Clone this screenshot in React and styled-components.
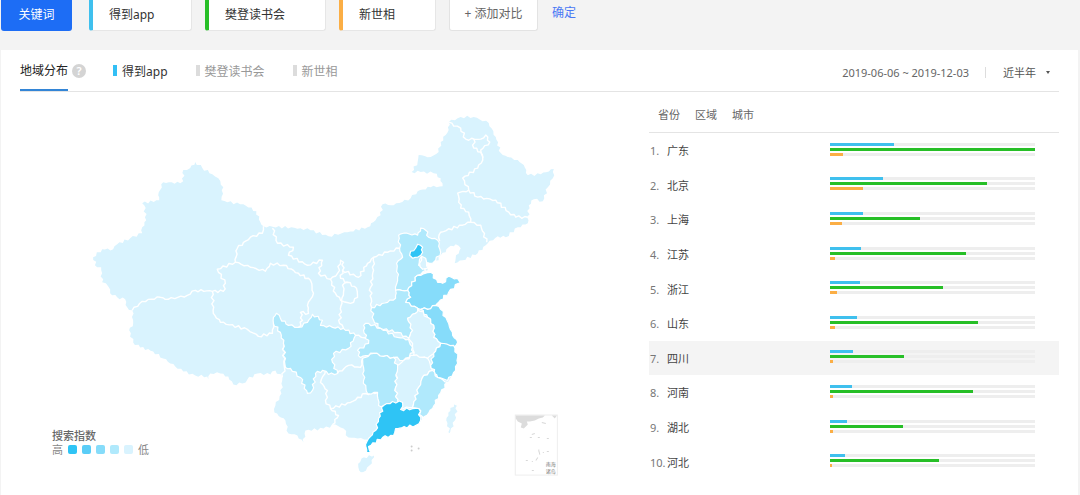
import React from 'react';
import styled, { createGlobalStyle } from 'styled-components';

const GlobalStyle = createGlobalStyle`
  * { box-sizing: border-box; }
  body {
    margin: 0;
    background: #f3f3f3;
    color: #333;
    font-family: "Noto Sans", "Noto Sans CJK SC", sans-serif;
    font-size: 12px;
    line-height: 18px;
  }
  button, input, select { font: inherit; }
`;

const Page = styled.div`
  display: flex;
  flex-direction: column;
  min-height: 100vh;
`;

const CompareBar = styled.form`
  display: flex;
  align-items: flex-start;
  height: 50px;
  padding-left: 1px;
`;

const KeywordButton = styled.button`
  width: 71px;
  height: 31px;
  margin-right: 17px;
  padding: 0 0 2px;
  border: 0;
  border-radius: 0 0 3px 3px;
  background: #1d6df5;
  color: #fff;
`;

const TermInput = styled.input`
  width: ${(p) => p.$width}px;
  height: 31px;
  margin-right: 13px;
  padding: 0 8px 2px 16px;
  border: 1px solid #e6e6e6;
  border-top: 0;
  border-left: 4px solid ${(p) => p.$color};
  border-radius: 0 0 3px 3px;
  background: #fff;
  color: #333;
  outline: 0;
`;

const AddButton = styled.button`
  width: 89px;
  height: 31px;
  padding: 0 0 2px;
  border: 1px solid #e3e3e3;
  border-top: 0;
  border-radius: 0 0 3px 3px;
  background: #fff;
  color: #666;
`;

const ConfirmButton = styled.button`
  margin: 4px 0 0 14px;
  padding: 0;
  border: 0;
  background: none;
  color: #4a78f5;
`;

const Panel = styled.main`
  flex: 1;
  margin: 0 2px 0 1px;
  padding: 0 19px;
  background: #fff;
`;

const PanelHeader = styled.header`
  display: flex;
  align-items: stretch;
  height: 42px;
  border-bottom: 1px solid #e4e4e4;
`;

const PanelTitle = styled.h2`
  height: 41px;
  margin: 0;
  padding-top: 12px;
  border-bottom: 2px solid #3385d6;
  color: #222;
  font-size: 12px;
  font-weight: 400;
`;

const HelpButton = styled.button`
  align-self: center;
  width: 14px;
  height: 14px;
  margin: 0 27px 0 4px;
  padding: 0;
  border: 0;
  border-radius: 50%;
  background: #d4d4d4;
  color: #fff;
  font-size: 11px;
  font-weight: 600;
  line-height: 14px;
`;

const SeriesList = styled.div`
  display: flex;
  gap: 28px;
`;

const SeriesButton = styled.button`
  display: flex;
  align-items: center;
  gap: 5px;
  padding: 2px 0 0;
  border: 0;
  background: none;
  color: ${(p) => (p.$active ? '#333' : '#999')};

  &::before {
    content: "";
    width: 4px;
    height: 11px;
    margin-bottom: 3px;
    background: ${(p) => (p.$active ? '#33bff5' : '#dcdcdc')};
  }
`;

const RangeGroup = styled.div`
  display: flex;
  align-items: center;
  margin-left: auto;
  padding: 4px 9px 0 0;
  color: #666;
  font-size: 11px;
`;

const RangeDivider = styled.span`
  width: 1px;
  height: 11px;
  margin: 0 17px 0 16px;
  background: #ddd;
`;

const PeriodField = styled.div`
  display: grid;
  align-items: center;
  width: 47px;

  & > * { grid-area: 1 / 1; }
  svg { justify-self: end; pointer-events: none; }
`;

const PeriodSelect = styled.select`
  appearance: none;
  width: 100%;
  height: 18px;
  padding: 0;
  border: 0;
  background: none;
  color: #555;
  outline: 0;
`;

const Content = styled.div`
  display: grid;
  grid-template-columns: minmax(0, 1fr) 410px;
  align-items: start;
`;

const MapFigure = styled.figure`
  display: grid;
  margin: 0;

  & > * { grid-area: 1 / 1; }
`;

const MapSvg = styled.svg`
  display: block;
  width: 100%;
  height: auto;
`;

const Legend = styled.figcaption`
  align-self: end;
  justify-self: start;
  padding: 0 0 38px 32px;
  color: #888;
  font-size: 11px;
  line-height: 14px;
`;

const LegendTitle = styled.strong`
  display: block;
  color: #666;
  font-weight: 500;
`;

const LegendScale = styled.div`
  display: flex;
  align-items: center;
  gap: 5px;
`;

const LegendSwatch = styled.span`
  width: 9px;
  height: 9px;
  border-radius: 2px;
  background: ${(p) => p.$color};
`;

const AreaTabs = styled.nav`
  display: flex;
  gap: 15px;
  height: 41px;
  padding: 5px 0 0 9px;
  border-bottom: 1px solid #e4e4e4;
`;

const AreaTab = styled.button`
  padding: 0;
  border: 0;
  background: none;
  color: #666;
  font-size: 11px;
`;

const RankTable = styled.table`
  width: 100%;
  height: 346px;
  border-collapse: collapse;
  table-layout: fixed;
  font-size: 11px;
`;

const RankRow = styled.tr`
  background: ${(p) => (p.$highlighted ? '#f4f4f4' : 'transparent')};
`;

const RankNumber = styled.td`
  width: 18px;
  padding: 2px 0 0 1px;
  color: #777;
  white-space: nowrap;
`;

const RankName = styled.th`
  padding: 2px 0 0;
  color: #444;
  font-weight: 400;
  text-align: left;
`;

const RankBars = styled.td`
  width: 229px;
  padding: 0 24px 2px 0;
`;

const BarStack = styled.div`
  display: grid;
  gap: 2px;
`;

const BarTrack = styled.div`
  height: 3px;
  background: #eee;
`;

const BarFill = styled.div`
  height: 3px;
  background: ${(p) => p.$color};
`;

const BLUE = '#3fc0ee';
const GREEN = '#27bf27';
const ORANGE = '#fbae45';

const TERMS = [
  { name: '得到app', color: BLUE, width: 103 },
  { name: '樊登读书会', color: GREEN, width: 121 },
  { name: '新世相', color: ORANGE, width: 97 },
];

const SCALE = ['#2fc4f5', '#5acdf7', '#86dcfa', '#b0e9fc', '#d9f3fe'];

const RANKING = [
  ['广东', 31, 100, 6.5],
  ['北京', 25.8, 76.8, 16],
  ['上海', 16, 44, 6],
  ['江苏', 15.3, 66.3, 2.6],
  ['浙江', 14.8, 55.3, 3.3],
  ['山东', 13.1, 72.2, 2.6],
  ['四川', 11.4, 36.2, 1.7],
  ['河南', 10.6, 69.6, 1.7],
  ['湖北', 8.4, 35.4, 1.7],
  ['河北', 7.2, 53.2, 1.2],
];

const MAINLAND = `93,257 97,267 101,267 102,282 108,286 110,293 117,297 125,299 127,307 132,310 133,323 129,330
133,342 140,347 153,351 163,358 175,366 183,371 195,375 207,376 208,379 210,373 220,373 228,376 233,384 242,383
247,379 257,373 270,374 275,370 282,377 281,393 275,405 274,412 285,420 288,433 297,435 303,442 305,430 323,428
335,424 343,428 348,437 357,438 367,439 366,452 370,452 368,446 382,437 393,435 395,428 415,425 420,420 422,419
432,408 438,395 447,382 449,379 457,363 457,357 453,345 457,342 452,335 448,323 440,309 435,307 438,302 448,292
458,283 462,281 448,276 442,283 437,282 430,272 417,275 427,270 425,262 432,263 438,260 440,255 445,252 448,247
455,244 460,248 455,258 454,263 462,260 477,253 487,243 497,236 505,237 517,227 527,223 528,205 533,199 542,201
547,187 552,178 553,169 540,174 527,175 523,165 517,160 507,157 500,153 495,137 488,123 473,117 460,117 448,122
448,130 440,142 438,152 430,157 418,155 417,162 411,172 420,172 433,173 440,178 442,186 430,187 417,191 410,198
393,205 382,204 380,215 375,220 367,227 347,232 328,236 310,230 300,228 263,226 260,222 256,211 243,204 227,202
221,200 223,187 218,178 212,174 202,168 195,162 190,168 183,170 183,181 180,183 163,182 158,195 159,200 142,203
144,205 146,220 142,227 142,233 130,238 117,244 113,249 102,249`;

const REGIONS = [
  ['四川', 3, '273,317 276,313 280,318 288,325 298,327 307,322 312,314 322,320 320,325 332,327 343,328 355,335 348,348 333,353 332,362 337,373 328,374 322,370 315,373 312,390 307,393 300,377 290,368 285,367 283,343 280,332 273,323'],
  ['河北', 3, '398,235 403,233 417,235 420,228 425,230 428,237 437,240 440,252 435,260 432,263 425,262 420,257 418,265 425,270 417,275 407,290 395,290 397,277 396,263 402,257 399,248'],
  ['山东', 2, '407,290 417,275 430,272 437,282 442,283 448,276 462,281 458,283 448,292 438,302 435,307 427,309 417,308 405,302 410,297'],
  ['河南', 3, '395,290 407,290 410,297 405,302 417,308 415,313 407,318 412,330 408,338 397,332 380,328 373,320 371,307 387,302 395,298'],
  ['江苏', 2, '420,309 427,309 435,305 440,309 448,323 452,335 457,342 453,347 440,343 433,337 433,325 427,317'],
  ['安徽', 4, '417,308 427,317 433,325 433,337 440,343 433,353 427,358 413,355 412,343 408,338 412,330 407,318 415,313'],
  ['浙江', 2, '440,343 453,345 457,357 457,363 455,370 447,380 437,377 430,365 433,353'],
  ['湖北', 3, '363,325 368,323 380,328 397,337 408,339 413,352 403,360 393,357 383,356 373,353 360,357 357,350 368,343 363,330'],
  ['湖南', 3, '362,358 373,353 383,356 393,357 397,367 395,387 397,402 383,405 378,405 377,392 367,393 363,380 363,367'],
  ['江西', 4, '397,365 403,360 413,355 427,358 432,370 423,375 418,387 412,407 400,407 397,402 395,387'],
  ['福建', 3, '423,375 432,370 437,377 447,382 438,395 432,408 422,419 418,408 412,407 418,387'],
  ['广东', 0, '383,405 392,401 402,402 400,409 418,408 420,420 415,425 395,428 393,435 382,437 368,446 370,452 366,452 365,444 368,438 375,430 378,418'],
  ['北京', 0, '409,255 410,251 415,248 417,244 422,247 422,252 417,257 412,258'],
  ['天津', 4, '421,256 425,258 426,262 427,268 422,269 419,263'],
  ['海南', 4, '357,463 363,456 374,454 372,463 363,472 358,470'],
  ['台湾', 4, '453,403 457,405 455,420 449,434 445,420 447,412'],
];

const BORDERS = [
  '132,310 142,301 160,297 168,299 187,295 195,290 212,291 223,291 225,283 217,269 235,262 237,248 250,237 262,233 263,226',
  '235,262 250,267 265,271 270,263 283,265 298,273 310,280 313,293 307,305 308,313 300,312 302,320 298,327',
  '212,291 213,313 220,322 247,329 258,336 272,333 273,323',
  '283,343 284,367 282,377',
  '272,228 277,243 293,247 288,255 307,265 322,260 318,273 330,279 337,273 340,260 343,262 342,270 358,277 367,263 373,257 387,252 399,248',
  '330,279 335,293 340,300 350,303 357,297 356,288 347,282 342,285 343,292 341,300 339,323 343,328',
  '342,270 340,278 347,282',
  '373,257 373,270 370,287 371,307',
  '355,335 367,338',
  '337,373 348,365 360,367 362,358',
  '328,374 325,370 320,382 327,390 325,400 330,408 350,402 365,393 377,392',
  '330,408 338,415 332,424',
  '448,122 453,126 460,128 465,139 480,139 485,135 489,142 480,150 482,160 477,168 462,178 468,190 457,193 460,208 468,212 470,222 480,225 486,242',
  '473,139 473,148 480,152 482,158',
  '468,190 477,197 495,200 508,212 515,217 527,217',
  '470,222 440,232 438,237 439,241',
];

const parsePoints = (text) => text.trim().split(/\s+/).map((pair) => pair.split(',').map(Number));

// Natural borders are irregular: each long edge gets a few small offsets.
// The offset depends only on the edge's end points, so neighbours still share it.
function roughen(text, closed) {
  const points = parsePoints(text);
  const result = [];
  const count = closed ? points.length : points.length - 1;
  for (let i = 0; i < count; i += 1) {
    const start = points[i];
    const end = points[(i + 1) % points.length];
    const reversed = start[0] > end[0] || (start[0] === end[0] && start[1] > end[1]);
    const [a, b] = reversed ? [end, start] : [start, end];
    const dx = b[0] - a[0];
    const dy = b[1] - a[1];
    const length = Math.hypot(dx, dy);
    const steps = Math.max(1, Math.round(length / 3));
    const inner = [];
    for (let k = 1; k < steps; k += 1) {
      const noise = Math.sin(a[0] * 12.9 + a[1] * 78.2 + b[0] * 37.7 + k * 41.3) * 1.3;
      const t = k / steps;
      inner.push([a[0] + dx * t - (dy / length) * noise, a[1] + dy * t + (dx / length) * noise]);
    }
    if (reversed) inner.reverse();
    result.push(start, ...inner);
  }
  if (!closed) result.push(points[points.length - 1]);
  return result.map(([x, y]) => `${x.toFixed(1)},${y.toFixed(1)}`).join(' ');
}

function ChinaMap() {
  return (
    <MapSvg viewBox="20 92 628 402" role="img" aria-label="地域分布">
      <polygon points={roughen(MAINLAND, true)} fill={SCALE[4]} />
      <g fill="none" stroke="#fff" strokeWidth="1.4" strokeLinejoin="round">
        {BORDERS.map((points) => (
          <polyline key={points} points={roughen(points, false)} />
        ))}
      </g>
      <g stroke="#fff" strokeWidth="1.2" strokeLinejoin="round">
        {REGIONS.map(([name, level, points]) => (
          <polygon key={name} points={roughen(points, true)} fill={SCALE[level]} />
        ))}
      </g>
      <g fill="#ccc">
        <circle cx="411" cy="446" r="1" />
        <circle cx="411" cy="450" r="1" />
        <circle cx="418" cy="448" r="1" />
      </g>
      <rect x="514.5" y="414.5" width="42" height="60" fill="#fff" stroke="#eee" />
      <path
        d="M515 415h29l-2 2-4 1-4 2-5 1-3 0 1 3-4 4-3-1 1-4-4-2-2-3zM551 415h5l-2 3z"
        fill="#dcdcdc"
      />
      <path
        d="M541 422l4 1M531 434l3-1M529 437h2M537 437h2M546 438h2M538 449v2M546 451h2M542 452h1M525 460h2M531 461h1M538 450l1 4M531 470h2M535 460l2-3"
        fill="none"
        stroke="#d8d8d8"
      />
      <g fill="#777" fontSize="5">
        <text x="545" y="465">南海</text>
        <text x="545" y="472">诸岛</text>
      </g>
    </MapSvg>
  );
}

function RankingRow({ index, entry }) {
  const [name, ...values] = entry;
  return (
    <RankRow $highlighted={name === '四川'}>
      <RankNumber>{index + 1}.</RankNumber>
      <RankName scope="row">{name}</RankName>
      <RankBars>
        <BarStack>
          {values.map((value, i) => (
            <BarTrack key={TERMS[i].name}>
              <BarFill $color={TERMS[i].color} style={{ width: `${value}%` }} />
            </BarTrack>
          ))}
        </BarStack>
      </RankBars>
    </RankRow>
  );
}

export default function App() {
  return (
    <Page>
      <GlobalStyle />
      <CompareBar onSubmit={(e) => e.preventDefault()}>
        <KeywordButton type="button">关键词</KeywordButton>
        {TERMS.map((term) => (
          <TermInput
            key={term.name}
            aria-label={term.name}
            defaultValue={term.name}
            $color={term.color}
            $width={term.width}
          />
        ))}
        <AddButton type="button">+ 添加对比</AddButton>
        <ConfirmButton type="submit">确定</ConfirmButton>
      </CompareBar>
      <Panel>
        <PanelHeader>
          <PanelTitle>地域分布</PanelTitle>
          <HelpButton type="button">?</HelpButton>
          <SeriesList>
            {TERMS.map((term, i) => (
              <SeriesButton key={term.name} type="button" $active={i === 0}>
                {term.name}
              </SeriesButton>
            ))}
          </SeriesList>
          <RangeGroup>
            <span>2019-06-06 ~ 2019-12-03</span>
            <RangeDivider />
            <PeriodField>
              <PeriodSelect aria-label="近半年" defaultValue="近半年">
                <option>近半年</option>
              </PeriodSelect>
              <svg width="4" height="3" viewBox="0 0 4 3" aria-hidden="true">
                <path d="M0 0h4L2 3z" fill="#555" />
              </svg>
            </PeriodField>
          </RangeGroup>
        </PanelHeader>
        <Content>
          <MapFigure>
            <ChinaMap />
            <Legend>
              <LegendTitle>搜索指数</LegendTitle>
              <LegendScale>
                <span>高</span>
                {SCALE.map((color) => (
                  <LegendSwatch key={color} $color={color} />
                ))}
                <span>低</span>
              </LegendScale>
            </Legend>
          </MapFigure>
          <section>
            <AreaTabs>
              <AreaTab type="button">省份</AreaTab>
              <AreaTab type="button">区域</AreaTab>
              <AreaTab type="button">城市</AreaTab>
            </AreaTabs>
            <RankTable>
              <tbody>
                {RANKING.map((entry, index) => (
                  <RankingRow key={entry[0]} index={index} entry={entry} />
                ))}
              </tbody>
            </RankTable>
          </section>
        </Content>
      </Panel>
    </Page>
  );
}
